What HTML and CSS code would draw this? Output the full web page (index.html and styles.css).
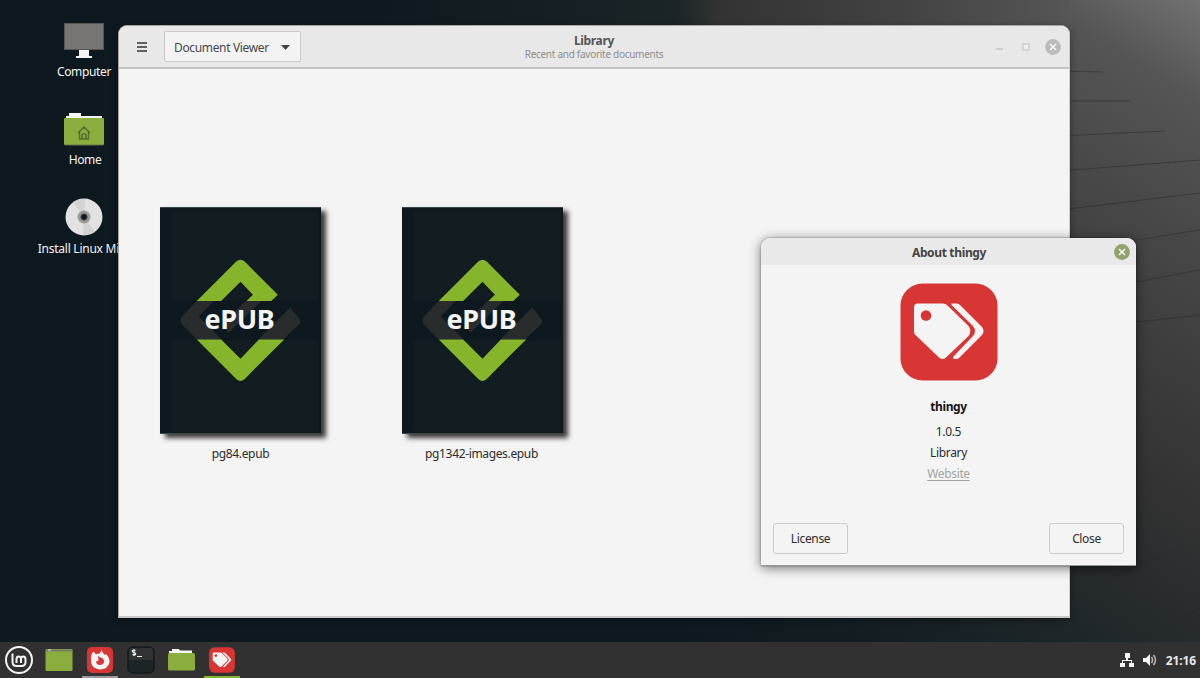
FILE: index.html
```html
<!DOCTYPE html>
<html lang="en">
<head>
<meta charset="utf-8">
<title>Library</title>
<link rel="stylesheet" href="styles.css">
</head>
<body>
<svg width="0" height="0" class="defs">
  <defs>
    <linearGradient id="wall" gradientUnits="userSpaceOnUse" x1="830" y1="620" x2="1230" y2="0">
      <stop offset="0" stop-color="#131e23"/><stop offset=".18" stop-color="#20272a"/>
      <stop offset=".38" stop-color="#323232"/><stop offset=".52" stop-color="#3b3b3b"/><stop offset=".7" stop-color="#484848"/>
      <stop offset=".86" stop-color="#555"/><stop offset="1" stop-color="#777"/>
    </linearGradient>
    <linearGradient id="left" x1="0" x2="1" y1="0" y2="0">
      <stop offset="0" stop-color="#0e191f"/><stop offset=".65" stop-color="#0e191f"/><stop offset="1" stop-color="#172125" stop-opacity="0"/>
    </linearGradient>
    <linearGradient id="strip" x1="0" x2="1" y1="0" y2="0">
      <stop offset="0" stop-color="#0e191f"/><stop offset=".43" stop-color="#1b2427"/>
      <stop offset=".49" stop-color="#333"/><stop offset=".75" stop-color="#424242"/><stop offset="1" stop-color="#565656"/>
    </linearGradient>
    <symbol id="epub" viewBox="0 0 162 228">
      <rect width="162" height="228" fill="#0e191f"/>
      <path d="M12 4h148v90H12zM12 134h148v92H12z" fill="#121d22"/>
      <path d="M22.500 109.500Q18.500 114 22.500 118.500L37 133H62L39 110L54 94.500H37ZM54 94.500H102L69 126L62 119L86 94.500ZM99 133H124L140.500 117Q142 114 139 111L131 101Z" fill="#292c2d"/>
      <path d="M37 94.500L77 54.500Q81 51 85 54.500L118.500 88L112 94.500H87L93.500 88L81 75L61.500 94.500Z" fill="#86b52b"/>
      <path d="M37 133H61.500L81 152.500L99.500 133H125L85 173Q81 176.500 77 173Z" fill="#86b52b"/>
    </symbol>
    <symbol id="tags" viewBox="0 0 98 98">
      <rect x=".5" y=".5" width="97" height="97" rx="22" fill="#d83634"/>
      <path d="M18 20.500H43Q46 20.500 48 23L68.500 43Q72 48 68.500 53L46 74.500Q42.500 77.500 39 74.500L15.500 52Q14 51 14 48V24.500Q14 20.500 18 20.500Z" fill="#f4f4f4"/>
      <circle cx="26" cy="32.500" r="5.300" fill="#d83634"/>
      <path d="M51 20.500H57Q59 20.500 61 23L82 44Q85 48 82 52L59 75Q58 76 56 76H54Q52 75 54 73L73 53Q77 48 73 43L52 22.500Z" fill="#f4f4f4"/>
    </symbol>
    <symbol id="close" viewBox="0 0 16 16">
      <circle cx="8" cy="8" r="7.900"/>
      <path d="M5 5l6 6M11 5l-6 6" stroke="#f4f4f4" stroke-width="1.700"/>
    </symbol>
  </defs>
</svg>
<main class="desktop">
  <svg class="wallpaper" width="1200" height="642" viewBox="0 0 1200 642">
    <rect width="1200" height="642" fill="url(#wall)"/>
    <rect width="1060" height="642" fill="url(#left)"/>
    <rect x="380" width="690" height="26" fill="url(#strip)"/>
    <g fill="none" stroke="#262829" stroke-opacity=".5" stroke-width="1">
      <path d="M1060 71L1103 72M1060 101H1130M1060 136L1165 131M1060 171L1200 160M1060 210L1200 193M1130 241L1200 230M1136 282L1200 270M1136 322L1200 315M1070 600L1182 544M990 642L1035 618M1140 642L1200 608"/>
    </g>
  </svg>

  <div class="shortcuts">
    <div class="shortcut">
      <svg width="40" height="36" viewBox="0 0 40 36"><path d="M0 0h40v27H0z" fill="#555"/><path d="M1 1h38v25H1z" fill="#777674"/><path d="M15 27h10v6h3v2H12v-2h3z" fill="#f4f4f4"/></svg>
      <span class="l-computer">Computer</span>
    </div>
    <div class="shortcut">
      <svg width="40" height="33" viewBox="0 0 40 33"><path d="M5 0h12v3h21v6H2V3h3z" fill="#f4f4f4"/><rect y="5" width="40" height="27" rx="1" fill="#8bad3e"/><path d="M1 32h38" stroke="#667148"/><path d="M14 20l6-6 6 6M15.500 19v7h9v-7M18 26v-4q2-3 4 0v4" stroke="#536a31" stroke-width="1.500" fill="none"/></svg>
      <span class="l-home">Home</span>
    </div>
    <div class="shortcut">
      <svg width="38" height="38" viewBox="0 0 38 38"><circle cx="19" cy="19" r="18.500" fill="#e2e2e2"/><path d="M19 19L8 4a18.500 18.500 0 0 1 12-3zM19 19l11 15a18.500 18.500 0 0 1-12 3z" fill="#d2d2d2"/><circle cx="19" cy="19" r="6.500" fill="#9a9996"/><circle cx="19" cy="19" r="3.200" fill="#0e191f" stroke="#555" stroke-width="1"/></svg>
      <span class="l-install">Install Linux Mint</span>
    </div>
  </div>

  <section class="window library">
    <header class="titlebar">
      <div class="left">
        <svg class="menu" width="10" height="10" viewBox="0 0 10 10"><path d="M0 1h10M0 5h10M0 9h10" stroke="#333" stroke-width="1.600"/></svg>
        <div class="select"><span class="l-viewer">Document Viewer</span><svg width="9" height="5" viewBox="0 0 9 5"><path d="M0 0h9L4.500 5z" fill="#444"/></svg></div>
      </div>
      <div class="heading"><b class="l-title">Library</b><span class="l-sub">Recent and favorite documents</span></div>
      <div class="controls">
        <svg class="minimize" width="8" height="8" viewBox="0 0 8 8"><path d="M0 6h7" stroke="#ccc" stroke-width="2"/></svg>
        <svg width="8" height="8" viewBox="0 0 8 8"><path d="M1 1h6v6H1z" fill="#f0f0f0" stroke="#ccc" stroke-width="1.500"/></svg>
        <svg width="16" height="16" fill="#bcbbba"><use href="#close"/></svg>
      </div>
    </header>
    <div class="shelf">
      <figure class="book">
        <div class="cover"><svg width="161" height="227"><use href="#epub"/></svg><b class="l-epub">ePUB</b></div>
        <figcaption class="l-b1">pg84.epub</figcaption>
      </figure>
      <figure class="book">
        <div class="cover"><svg width="161" height="227"><use href="#epub"/></svg><b class="l-epub">ePUB</b></div>
        <figcaption class="l-b2">pg1342-images.epub</figcaption>
      </figure>
    </div>
  </section>

  <section class="window about">
    <header><b class="l-about">About thingy</b><svg width="16" height="16" fill="#93a16a"><use href="#close"/></svg></header>
    <div class="about-body">
      <svg width="98" height="98"><use href="#tags"/></svg>
      <b class="l-thingy">thingy</b>
      <span class="l-version">1.0.5</span>
      <span class="l-library">Library</span>
      <a class="l-website">Website</a>
    </div>
    <footer><button class="l-license">License</button><button class="l-close">Close</button></footer>
  </section>
</main>

<nav class="panel">
  <div class="apps">
    <div class="app mint"><svg width="30" height="30" viewBox="0 0 30 30" fill="none" stroke="#f4f4f4"><circle cx="15" cy="15" r="13" stroke-width="2"/><path d="M8.500 8.500V17q0 4 4 4h5q4 0 4-4v-3q0-2.500-2.200-2.500T17 14v4M17 14q0-2.500-2.200-2.500T12.500 14v4" stroke-width="2"/></svg></div>
    <div class="app files"><svg width="28" height="24" viewBox="0 0 28 24"><rect x=".5" y="1" width="27" height="22" rx="1" fill="#8bad3e"/><path d="M1 2.500h26" stroke="#777d64" stroke-width="2"/><path d="M3 2h3" stroke="#e5e5e5"/></svg></div>
    <div class="app firefox running"><svg width="26" height="26" viewBox="0 0 26 26"><rect width="26" height="26" rx="5" fill="#d83634"/><path d="M5 6l2-1 2 2.500Q11 6 13 6.500L14.500 3q1 3 3.500 5l1-1q4 4 3.500 8.500Q21 22 13 22.500 5 22 4 15 3.500 10 5 6z" fill="#f4f4f4"/><path d="M11 9l2.500 1.500q4 1 3.500 4.500-1 3-4 3-3.500 0-4-3.500l2.500-1z" fill="#d83634"/></svg></div>
    <div class="app terminal"><svg width="28" height="28" viewBox="0 0 28 28"><rect x="1" y="1" width="26" height="26" rx="5" fill="#1d2427" stroke="#101b20" stroke-width="1.500"/><path d="M4 2h20q2 1 2 6v6H2V6q0-3 2-4z" fill="#303233"/><path d="M7 3v7M8.500 4.500Q7 3.500 5.500 4.500 4.500 6 7 6.500q2.500.7 1.500 2-1.500 1-3 0M10 10.500h5" fill="none" stroke="#eee" stroke-width="1.100"/></svg></div>
    <div class="app folder"><svg width="27" height="22" viewBox="0 0 27 22"><path d="M4 0h7l1 1.500h12V6H1V2h3z" fill="#f4f4f4"/><rect y="4" width="27" height="17.500" rx="1.500" fill="#8bad3e"/></svg></div>
    <div class="app tags running green"><svg width="26" height="26"><use href="#tags"/></svg></div>
  </div>
  <div class="tray">
    <svg width="14" height="14" viewBox="0 0 14 14"><path d="M5 0h5v5H8v2h4v3h2v4H9v-4h2V8H3v2h2v4H0v-4h2V7h4V5H5z" fill="#f4f4f4"/></svg>
    <svg width="14" height="12" viewBox="0 0 14 12"><path d="M0 4h3l4-4v12L3 8H0z" fill="#f4f4f4"/><path d="M8.500 3q2 3 0 6M10.500 1q4 5 0 10" fill="none" stroke="#b8b8b8" stroke-width="1.500"/></svg>
    <b class="l-time">21:16</b>
  </div>
</nav>
</body>
</html>
```
FILE: styles.css
```css
* { box-sizing: border-box; }
body { margin: 0; width: 1200px; height: 678px; overflow: hidden; display: flex; flex-direction: column; font: 12px/16px "Noto Sans", "Open Sans", sans-serif; letter-spacing: -.35px; color: #2c2c2c; background: #0e191f; }
svg { display: block; flex: none; }
span, b, a, figcaption { white-space: nowrap; }
.defs { position: absolute; }
.desktop { position: relative; height: 642px; overflow: hidden; }
.wallpaper { position: absolute; inset: 0; }
.shortcuts { position: absolute; left: 24px; top: 23px; width: 120px; display: flex; flex-direction: column; color: #f4f4f4; }
.shortcut { height: 88px; display: flex; flex-direction: column; align-items: center; justify-content: space-between; padding-bottom: 31px; }
.shortcut:nth-child(2) { padding-top: 2px; }
.shortcut:nth-child(3) { margin-top: -1px; height: 90px; }
.l-home { padding-left: 2px; }
.l-install { letter-spacing: -.25px; }
.window { position: absolute; background: #f4f4f4; }
.library { left: 118px; top: 25px; width: 952px; height: 593px; border: 1px solid #a9a5a1; border-right-color: #ccc; border-bottom: 2px solid #c8c8c8; border-radius: 9px 9px 0 0; box-shadow: 0 2px 7px #0006; }
.titlebar { height: 43px; display: grid; grid-template-columns: 1fr auto 1fr; align-items: center; background: #e8e8e8; border-bottom: 2px solid #c4c4c4; border-radius: 8px 8px 0 0; }
.left { display: flex; align-items: center; padding-left: 18px; gap: 17px; }
.select { width: 137px; height: 31px; display: flex; align-items: center; justify-content: space-between; padding: 2px 10px 0 9px; border: 1px solid #c9c9c9; border-radius: 2px; background: #f3f3f3; color: #484848; }
.heading { display: flex; flex-direction: column; align-items: center; color: #555; line-height: 14px; padding-top: 1px; }
.l-sub { font-size: 10px; line-height: 12px; letter-spacing: -.28px; color: #8e8d8b; }
.controls { display: flex; align-items: center; justify-content: flex-end; gap: 15px; padding-right: 8px; }
.minimize { margin-right: 3px; }
.shelf { display: flex; gap: 81px; padding: 138px 0 0 41px; }
.book { margin: 0; width: 161px; display: flex; flex-direction: column; align-items: center; gap: 12px; }
.cover { display: grid; place-items: center; box-shadow: 5px 4px 5px #3b3836; }
.cover > * { grid-area: 1 / 1; }
.l-epub { font-size: 27px; line-height: 32px; letter-spacing: -.3px; padding: 0 2px 3px 0; color: #f4f4f4; }
.l-b2 { padding-right: 2px; }
.about { left: 761px; top: 238px; width: 375px; height: 328px; border-radius: 9px 9px 0 0; border-bottom: 1px solid #999; box-shadow: 0 2px 12px #0008, 0 0 2px #0006; display: flex; flex-direction: column; }
.about header { height: 27px; display: grid; grid-template-columns: 1fr auto 1fr; align-items: center; background: #e9e9e9; border-radius: 9px 9px 0 0; color: #444; }
.l-about { grid-column: 2; padding: 2px 0 0 1px; }
.about header svg { justify-self: end; margin-right: 6px; }
.about-body { flex: 1; display: flex; flex-direction: column; align-items: center; padding-top: 18px; }
.l-thingy { margin: 18px 0 9px; color: #151515; }
.l-version { margin-bottom: 5px; }
.l-library { margin-bottom: 5px; }
.l-website { color: #a4a3a0; text-decoration: underline; text-underline-offset: 2px; }
footer { display: flex; justify-content: space-between; padding: 0 12px 11px; }
button { width: 75px; height: 31px; padding: 0; font: inherit; letter-spacing: inherit; color: inherit; background: #f4f4f4; border: 1px solid #ccc; border-radius: 3px; }
.panel { height: 36px; background: #313131; display: flex; justify-content: space-between; align-items: center; }
.apps { display: flex; height: 36px; gap: 4.800px; padding-left: .5px; }
.app { width: 36px; display: grid; place-items: center; }
.running { border-bottom: 2px solid #999; padding-top: 2px; }
.green { border-bottom-color: #86b52b; }
.tray { display: flex; align-items: center; gap: 9px; padding-right: 4px; color: #e8e8e8; }
.l-time { letter-spacing: -.1px; padding-top: 1px; }
```
